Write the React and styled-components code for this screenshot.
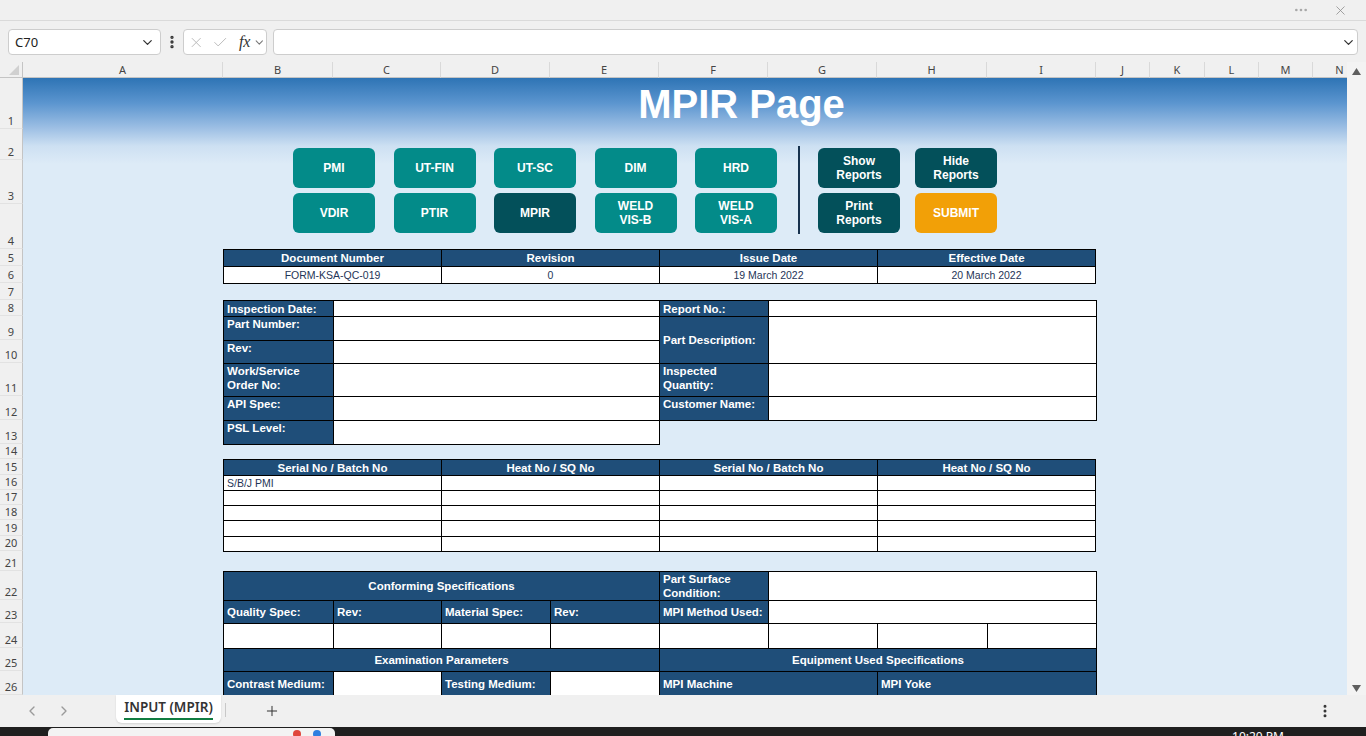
import React from 'react';
import styled, { createGlobalStyle } from 'styled-components';
import { ChevronDown, ChevronLeft, ChevronRight, X, Check, Ellipsis, EllipsisVertical, Plus } from 'lucide-react';

const GlobalStyle = createGlobalStyle`
  html, body {
    margin: 0;
    padding: 0;
  }
  body {
    width: 1366px;
    height: 736px;
    overflow: hidden;
    background: #f0f0f0;
    font-family: "Noto Sans", "Liberation Sans", sans-serif;
  }
  * {
    box-sizing: border-box;
  }
`;

// column widths A..N and row heights 1..26, read off the screenshot
const COLS = [200, 110, 108, 109, 109, 109, 109, 110, 109, 54, 55, 54, 54, 54];
const LETTERS = 'ABCDEFGHIJKLMN'.split('');
const ROWS = [51, 31, 44, 45, 17, 17, 17, 16, 24, 23, 33, 24, 24, 15, 16, 15, 15, 15, 16, 15, 20, 29, 23, 25, 23, 24];

const TONES = {
  teal: '#038b89',
  dark: '#03505a',
  amber: '#f2a007',
};

const NAV = [
  { lines: ['PMI'], tone: 'teal' },
  { lines: ['UT-FIN'], tone: 'teal' },
  { lines: ['UT-SC'], tone: 'teal' },
  { lines: ['DIM'], tone: 'teal' },
  { lines: ['HRD'], tone: 'teal' },
  { lines: ['VDIR'], tone: 'teal' },
  { lines: ['PTIR'], tone: 'teal' },
  { lines: ['MPIR'], tone: 'dark' },
  { lines: ['WELD', 'VIS-B'], tone: 'teal' },
  { lines: ['WELD', 'VIS-A'], tone: 'teal' },
];

const REPORTS = [
  { lines: ['Show', 'Reports'], tone: 'dark' },
  { lines: ['Hide', 'Reports'], tone: 'dark' },
  { lines: ['Print', 'Reports'], tone: 'dark' },
  { lines: ['SUBMIT'], tone: 'amber' },
];

const Window = styled.div`
  width: 1366px;
  height: 736px;
  display: flex;
  flex-direction: column;
  background: #f0f0f0;
`;

const TitleStrip = styled.div`
  height: 21px;
  border-bottom: 1px solid #dadada;
  display: flex;
  align-items: center;
  justify-content: flex-end;
  gap: 24px;
  padding-right: 18px;
`;

const FormulaBar = styled.div`
  height: 41px;
  display: flex;
  align-items: center;
  padding: 1px 8px 0 8px;
`;

const NameBox = styled.div`
  width: 153px;
  height: 26px;
  background: #fff;
  border: 1px solid #cdcdcd;
  border-radius: 4px;
  display: flex;
  align-items: center;
  justify-content: space-between;
  padding: 0 5px 0 6px;
  font-size: 13px;
  color: #222;
`;

const Kebab = styled.div`
  width: 22px;
  display: flex;
  justify-content: center;
`;

const FxBox = styled.div`
  width: 84px;
  height: 26px;
  background: #fff;
  border: 1px solid #cdcdcd;
  border-radius: 4px;
  display: flex;
  align-items: center;
  gap: 8px;
  padding-left: 4px;
`;

const Fx = styled.span`
  font-family: "Liberation Serif", serif;
  font-style: italic;
  font-size: 16px;
  color: #333;
  margin-left: 2px;
  margin-right: -5px;
`;

const FormulaInput = styled.div`
  flex: 1;
  margin-left: 6px;
  height: 26px;
  background: #fff;
  border: 1px solid #cdcdcd;
  border-radius: 4px;
  display: flex;
  align-items: center;
  justify-content: flex-end;
  padding-right: 1px;
`;

const SheetWrap = styled.div`
  height: 633px;
  display: flex;
`;

const SheetGrid = styled.div`
  flex: 1;
  min-width: 0;
  display: grid;
  grid-template-columns: 23px ${COLS.map((c) => c + 'px').join(' ')};
  grid-template-rows: 16px ${ROWS.map((r) => r + 'px').join(' ')};
  overflow: hidden;
`;

const Corner = styled.div`
  grid-row: 1;
  grid-column: 1;
  border-right: 1px solid #c4c4c4;
  border-bottom: 1px solid #c4c4c4;
  position: relative;
  &::after {
    content: '';
    position: absolute;
    right: 3px;
    bottom: 2px;
    border-style: solid;
    border-width: 0 0 10px 10px;
    border-color: transparent transparent #d0d0d0 transparent;
  }
`;

const ColHead = styled.div`
  grid-row: 1;
  grid-column: ${(p) => p.$col};
  border-right: 1px solid #d9d9d9;
  border-bottom: 1px solid #c4c4c4;
  display: flex;
  align-items: center;
  justify-content: center;
  font-size: 11px;
  color: #444;
  line-height: 14px;
`;

const RowHead = styled.div`
  grid-column: 1;
  grid-row: ${(p) => p.$row};
  border-right: 1px solid #c4c4c4;
  border-bottom: 1px solid #e2e2e2;
  display: flex;
  align-items: flex-end;
  justify-content: center;
  font-size: 11px;
  line-height: 14px;
  color: #444;
  padding-bottom: 0;
`;

const Banner = styled.div`
  grid-column: 2 / -1;
  grid-row: 2 / -1;
  background: linear-gradient(
    180deg,
    #2e74b5 0px,
    #5b95cf 25px,
    #9dbfe4 50px,
    #cde0f2 68px,
    #ddebf7 86px,
    #ddebf7 100%
  );
`;

const Title = styled.div`
  grid-column: 4 / 12;
  grid-row: 2;
  display: flex;
  align-items: center;
  justify-content: center;
  font-family: "Liberation Sans", Arial, sans-serif;
  font-weight: 700;
  font-size: 40px;
  color: #fff;
  padding-top: 2px;
`;

const ButtonPanel = styled.div`
  grid-column: 3 / 11;
  grid-row: 3 / 6;
  display: flex;
  align-items: flex-start;
  padding: 17px 0 0 70px;
`;

const NavGrid = styled.div`
  margin-top: 2px;
  display: grid;
  grid-template-columns: repeat(5, 82px);
  grid-auto-rows: 40px;
  column-gap: 18.5px;
  row-gap: 5px;
`;

const ReportGrid = styled.div`
  margin-top: 2px;
  display: grid;
  grid-template-columns: repeat(2, 82px);
  grid-auto-rows: 40px;
  column-gap: 15px;
  row-gap: 5px;
`;

const Divider = styled.div`
  width: 2px;
  height: 88px;
  background: #17324e;
  margin: 0 18px 0 21px;
`;

const ShapeButton = styled.div`
  background: ${(p) => TONES[p.$tone]};
  border-radius: 6px;
  display: flex;
  align-items: center;
  justify-content: center;
  text-align: center;
  color: #fff;
  font-family: "Liberation Sans", Arial, sans-serif;
  font-weight: 700;
  font-size: 12px;
  line-height: 14px;
  cursor: pointer;
`;

const TableBlock = styled.div`
  grid-column: 3 / 11;
  grid-row: ${(p) => p.$rows};
`;

const Table = styled.table`
  width: 100%;
  height: 100%;
  border-collapse: collapse;
  table-layout: fixed;
  font-family: "Liberation Sans", Arial, sans-serif;
`;

const Col = styled.col`
  width: ${(p) => p.$w}px;
`;

const Row = styled.tr`
  height: ${(p) => p.$h}px;
`;

const Head = styled.th`
  border: 1px solid #000;
  background: #1f4e79;
  color: #fff;
  font-size: 11.5px;
  font-weight: 700;
  line-height: 14px;
  text-align: center;
  vertical-align: middle;
  padding: 0 3px;
  white-space: nowrap;
`;

const Label = styled.td`
  border: 1px solid #000;
  background: #1f4e79;
  color: #fff;
  font-size: 11.5px;
  font-weight: 700;
  line-height: 14px;
  text-align: left;
  vertical-align: ${(p) => (p.$top ? 'top' : 'middle')};
  padding: 0 3px;
  white-space: nowrap;
  overflow: hidden;
`;

const Field = styled.td`
  border: 1px solid #000;
  background: #fff;
  color: #1f3557;
  font-size: 10.5px;
  line-height: 14px;
  text-align: ${(p) => (p.$center ? 'center' : 'left')};
  vertical-align: middle;
  padding: 0 3px;
  white-space: nowrap;
  overflow: hidden;
`;

const Void = styled.td`
  border: none;
  background: transparent;
`;

const VScroll = styled.div`
  width: 19px;
  display: flex;
  flex-direction: column;
  align-items: center;
  justify-content: space-between;
  padding: 6px 0 3px;
  background: #f3f3f3;
`;

const TabBar = styled.div`
  height: 32px;
  display: flex;
  align-items: flex-start;
  padding-left: 24px;
`;

const TabNav = styled.div`
  height: 31px;
  display: flex;
  align-items: center;
  gap: 16px;
`;

const SheetTab = styled.div`
  margin-left: 44px;
  width: 105px;
  height: 28px;
  background: #fff;
  border-radius: 0 0 6px 6px;
  box-shadow: 0 1px 2px rgba(0, 0, 0, 0.12);
  display: flex;
  justify-content: center;
  padding-top: 3px;
`;

const TabLabel = styled.span`
  font-size: 13.5px;
  font-weight: 600;
  color: #333;
  line-height: 18px;
  height: 22px;
  border-bottom: 2px solid #107c41;
`;

const TabSep = styled.div`
  width: 1px;
  height: 14px;
  background: #c8c8c8;
  margin: 8px 0 0 4px;
`;

const AddSheet = styled.div`
  height: 31px;
  display: flex;
  align-items: center;
  margin-left: 38px;
`;

const TabMenu = styled.div`
  height: 31px;
  display: flex;
  align-items: center;
  margin-left: auto;
  margin-right: 33px;
`;

const Taskbar = styled.div`
  height: 9px;
  background: #1f1f1f;
  display: flex;
  align-items: flex-start;
  overflow: hidden;
`;

const SearchBox = styled.div`
  margin: 1px 0 0 48px;
  width: 287px;
  height: 10px;
  background: #f3f3f3;
  border-radius: 5px 5px 0 0;
  display: flex;
  justify-content: flex-end;
  padding-right: 14px;
  gap: 12px;
`;

const SearchDot = styled.span`
  width: 8px;
  height: 8px;
  margin-top: 2px;
  border-radius: 50%;
  background: ${(p) => p.$color};
`;

const Clock = styled.span`
  margin: 4px 82px 0 auto;
  color: #fff;
  font-size: 12px;
  line-height: 12px;
`;

const Arrow = ({ down }) => (
  <svg width="9" height="7" viewBox="0 0 9 7">
    <polygon points={down ? '0,0 9,0 4.5,7' : '0,7 9,7 4.5,0'} fill="#5f5f5f" />
  </svg>
);

const Lines = ({ lines }) =>
  lines.map((l, i) => (
    <React.Fragment key={i}>
      {i > 0 && <br />}
      {l}
    </React.Fragment>
  ));

const App = () => {
  return (
    <>
      <GlobalStyle />
      <Window>
        <TitleStrip>
          <Ellipsis size={16} color="#a8a8a8" />
          <X size={15} color="#8a8a8a" strokeWidth={1.25} />
        </TitleStrip>

        <FormulaBar>
          <NameBox>
            <span>C70</span>
            <ChevronDown size={15} color="#333" />
          </NameBox>
          <Kebab>
            <EllipsisVertical size={16} color="#333" strokeWidth={3} />
          </Kebab>
          <FxBox>
            <X size={17} color="#b8b8b8" strokeWidth={1.4} />
            <Check size={17} color="#b8b8b8" strokeWidth={1.4} />
            <Fx>fx</Fx>
            <ChevronDown size={13} color="#777" />
          </FxBox>
          <FormulaInput>
            <ChevronDown size={15} color="#333" />
          </FormulaInput>
        </FormulaBar>

        <SheetWrap>
          <SheetGrid>
            <Corner />
            {LETTERS.map((l, i) => (
              <ColHead key={l} $col={i + 2}>{l}</ColHead>
            ))}
            {ROWS.map((_, i) => (
              <RowHead key={i} $row={i + 2}>{i + 1}</RowHead>
            ))}

            <Banner />
            <Title>MPIR Page</Title>

            <ButtonPanel>
              <NavGrid>
                {NAV.map((b, i) => (
                  <ShapeButton key={i} $tone={b.tone}><Lines lines={b.lines} /></ShapeButton>
                ))}
              </NavGrid>
              <Divider />
              <ReportGrid>
                {REPORTS.map((b, i) => (
                  <ShapeButton key={i} $tone={b.tone}><Lines lines={b.lines} /></ShapeButton>
                ))}
              </ReportGrid>
            </ButtonPanel>

            {/* document control */}
            <TableBlock $rows="6 / 8">
              <Table>
                <tbody>
                  <Row $h={17}>
                    <Head>Document Number</Head>
                    <Head>Revision</Head>
                    <Head>Issue Date</Head>
                    <Head>Effective Date</Head>
                  </Row>
                  <Row $h={17}>
                    <Field $center>FORM-KSA-QC-019</Field>
                    <Field $center>0</Field>
                    <Field $center>19 March 2022</Field>
                    <Field $center>20 March 2022</Field>
                  </Row>
                </tbody>
              </Table>
            </TableBlock>

            {/* inspection details */}
            <TableBlock $rows="9 / 15">
              <Table>
                <colgroup>
                  <Col $w={110} />
                  <Col $w={326} />
                  <Col $w={109} />
                  <Col $w={328} />
                </colgroup>
                <tbody>
                  <Row $h={16}>
                    <Label>Inspection Date:</Label>
                    <Field />
                    <Label>Report No.:</Label>
                    <Field />
                  </Row>
                  <Row $h={24}>
                    <Label $top>Part Number:</Label>
                    <Field />
                    <Label rowSpan={2}>Part Description:</Label>
                    <Field rowSpan={2} />
                  </Row>
                  <Row $h={23}>
                    <Label $top>Rev:</Label>
                    <Field />
                  </Row>
                  <Row $h={33}>
                    <Label $top>Work/Service<br />Order No:</Label>
                    <Field />
                    <Label $top>Inspected<br />Quantity:</Label>
                    <Field />
                  </Row>
                  <Row $h={24}>
                    <Label $top>API Spec:</Label>
                    <Field />
                    <Label $top>Customer Name:</Label>
                    <Field />
                  </Row>
                  <Row $h={24}>
                    <Label $top>PSL Level:</Label>
                    <Field />
                    <Void colSpan={2} />
                  </Row>
                </tbody>
              </Table>
            </TableBlock>

            {/* serial / heat numbers */}
            <TableBlock $rows="16 / 22">
              <Table>
                <tbody>
                  <Row $h={16}>
                    <Head>Serial No / Batch No</Head>
                    <Head>Heat No / SQ No</Head>
                    <Head>Serial No / Batch No</Head>
                    <Head>Heat No / SQ No</Head>
                  </Row>
                  {[15, 15, 15, 16, 15].map((h, i) => (
                    <Row key={i} $h={h}>
                      <Field>{i === 0 ? 'S/B/J PMI' : ''}</Field>
                      <Field />
                      <Field />
                      <Field />
                    </Row>
                  ))}
                </tbody>
              </Table>
            </TableBlock>

            {/* specifications & parameters */}
            <TableBlock $rows="23 / 28">
              <Table>
                <colgroup>
                  {[110, 108, 109, 109, 109, 109, 110, 109].map((w, i) => (
                    <Col key={i} $w={w} />
                  ))}
                </colgroup>
                <tbody>
                  <Row $h={29}>
                    <Head colSpan={4}>Conforming Specifications</Head>
                    <Label $top>Part Surface<br />Condition:</Label>
                    <Field colSpan={3} />
                  </Row>
                  <Row $h={23}>
                    <Label>Quality Spec:</Label>
                    <Label>Rev:</Label>
                    <Label>Material Spec:</Label>
                    <Label>Rev:</Label>
                    <Label>MPI Method Used:</Label>
                    <Field colSpan={3} />
                  </Row>
                  <Row $h={25}>
                    {Array.from({ length: 8 }).map((_, i) => (
                      <Field key={i} />
                    ))}
                  </Row>
                  <Row $h={23}>
                    <Head colSpan={4}>Examination Parameters</Head>
                    <Head colSpan={4}>Equipment Used Specifications</Head>
                  </Row>
                  <Row $h={24}>
                    <Label>Contrast Medium:</Label>
                    <Field />
                    <Label>Testing Medium:</Label>
                    <Field />
                    <Label colSpan={2}>MPI Machine</Label>
                    <Label colSpan={2}>MPI Yoke</Label>
                  </Row>
                </tbody>
              </Table>
            </TableBlock>
          </SheetGrid>

          <VScroll>
            <Arrow />
            <Arrow down />
          </VScroll>
        </SheetWrap>

        <TabBar>
          <TabNav>
            <ChevronLeft size={16} color="#9a9a9a" />
            <ChevronRight size={16} color="#9a9a9a" />
          </TabNav>
          <SheetTab>
            <TabLabel>INPUT (MPIR)</TabLabel>
          </SheetTab>
          <TabSep />
          <AddSheet>
            <Plus size={16} color="#333" strokeWidth={1.5} />
          </AddSheet>
          <TabMenu>
            <EllipsisVertical size={16} color="#333" strokeWidth={2.5} />
          </TabMenu>
        </TabBar>

        <Taskbar>
          <SearchBox>
            <SearchDot $color="#e0463c" />
            <SearchDot $color="#2f7fe0" />
          </SearchBox>
          <Clock>10:20 PM</Clock>
        </Taskbar>
      </Window>
    </>
  );
};

export default App;
